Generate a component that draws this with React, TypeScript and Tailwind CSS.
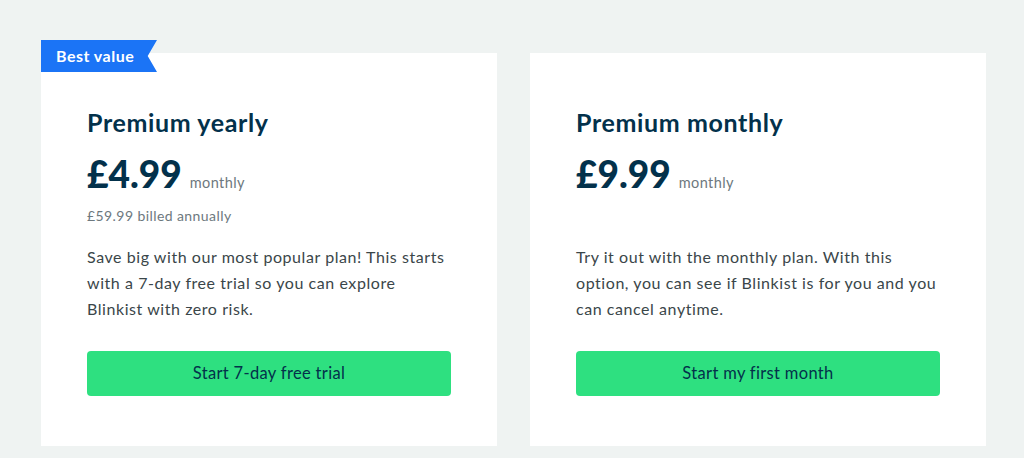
import React from "react";

interface Plan {
	id: string;
	title: string;
	price: string;
	period: string;
	billed?: string;
	description: string;
	cta: string;
	badge?: string;
}

const plans: Plan[] = [
	{
		id: "yearly",
		title: "Premium yearly",
		price: "£4.99",
		period: "monthly",
		billed: "£59.99 billed annually",
		description:
			"Save big with our most popular plan! This starts with a 7-day free trial so you can explore Blinkist with zero risk.",
		cta: "Start 7-day free trial",
		badge: "Best value",
	},
	{
		id: "monthly",
		title: "Premium monthly",
		price: "£9.99",
		period: "monthly",
		description:
			"Try it out with the monthly plan. With this option, you can see if Blinkist is for you and you can cancel anytime.",
		cta: "Start my first month",
	},
];

const PlanCard: React.FC<{ plan: Plan }> = ({ plan }) => {
	return (
		<div className="relative w-[456px] bg-white px-[46px] pt-[53px] pb-[50px]">
			{plan.badge && (
				// ruban bleu avec encoche à droite
				<div className="absolute left-0 top-[-13px] flex h-[32px] w-[116px] items-center bg-[#1b74f6] pl-[15px] text-[16px] font-bold tracking-[0.03em] text-white [clip-path:polygon(0_0,100%_0,92%_50%,100%_100%,0_100%)]">
					{plan.badge}
				</div>
			)}
			<h3 className="text-[25px] leading-[32px] font-bold tracking-[0.025em] text-[#03314b]">
				{plan.title}
			</h3>
			<div className="mt-[12px] flex items-baseline gap-[8px]">
				<span className="text-[37px] leading-[48px] font-black text-[#03314b]">
					{plan.price}
				</span>
				<span className="text-[14.5px] tracking-[0.03em] text-[#6d787e]">
					{plan.period}
				</span>
			</div>
			<p
				className={`mt-[8px] h-[20px] text-[14px] leading-[20px] tracking-[0.03em] text-[#6d787e] ${
					plan.billed ? "" : "invisible"
				}`}
			>
				{plan.billed ?? "-"}
			</p>
			<p className="mt-[18px] text-[16px] leading-[26px] tracking-[0.035em] text-[#3a4649]">
				{plan.description}
			</p>
			<button className="mt-[29px] flex h-[45px] w-full items-center justify-center rounded-[4px] bg-[#2ee080] text-[16.5px] tracking-[0.02em] text-[#03314b]">
				{plan.cta}
			</button>
		</div>
	);
};

export default function App() {
	return (
		<div
			className="flex h-[458px] w-[1024px] items-start gap-[33px] bg-[#eff3f2] pl-[41px] pt-[53px]"
			style={{ fontFamily: "Lato, 'Noto Sans', sans-serif" }}
		>
			{plans.map((plan) => (
				<PlanCard key={plan.id} plan={plan} />
			))}
		</div>
	);
}
